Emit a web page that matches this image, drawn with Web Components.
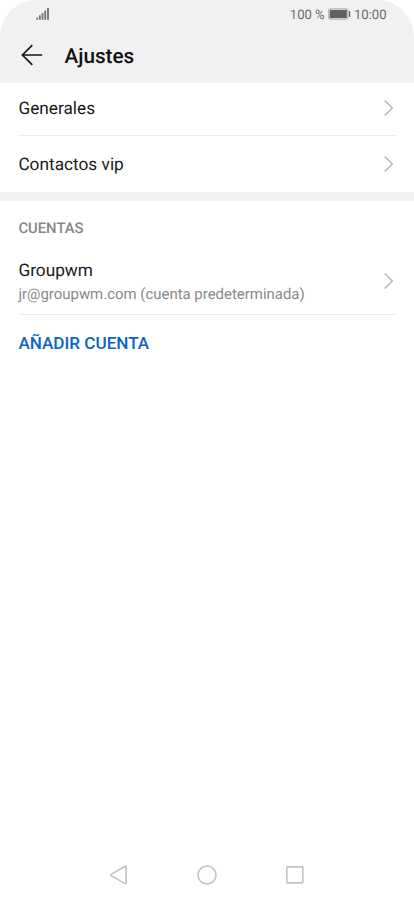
<!DOCTYPE html>
<html lang="es">
<head>
<meta charset="utf-8">
<title>Ajustes</title>
<style>
body { margin: 0; background: #fff; font-family: Roboto, "Liberation Sans", sans-serif; text-rendering: geometricPrecision; }
</style>
</head>
<body>
<settings-screen></settings-screen>
<script>
const define = (name, html) => {
  const template = document.createElement('template');
  template.innerHTML = html;
  customElements.define(name, class extends HTMLElement {
    constructor() {
      super();
      this.attachShadow({ mode: 'open' }).append(template.content.cloneNode(true));
    }
  });
};

define('status-bar', `
<style>
:host { display: flex; align-items: center; box-sizing: border-box; height: 28px; padding: 0 27.5px 0 36px; color: #6b6b6b; font-size: 13.1px; line-height: 24px; }
svg { display: block; flex: none; }
span { padding-top: 3px; }
.space { flex: 1; }
.battery { margin: 0 3px 0 3.2px; }
</style>
<svg width="14" height="28" viewBox="0 0 14 28" fill="#707070">
<rect x=".3" y="17.4" width="1.6" height="2.4"/><rect x="3" y="15.2" width="1.7" height="4.6"/><rect x="5.7" y="13" width="1.7" height="6.8"/><rect x="8.4" y="10.6" width="1.7" height="9.2"/><rect x="11.1" y="8" width="1.8" height="11.8"/>
</svg>
<span class="space"></span>
<span>100 %</span>
<svg class="battery" width="23" height="28" viewBox="0 0 23 28">
<rect x=".6" y="8.7" width="19.3" height="10.6" rx="1.4" fill="#d4d4d4" stroke="#b5b5b5" stroke-width="1"/><rect x="1.8" y="10" width="17" height="8" fill="#606060"/><rect x="20.8" y="11" width="1.4" height="6" rx=".6" fill="#666"/>
</svg>
<span>10:00</span>`);

define('app-header', `
<style>
:host { display: block; height: 82.6px; background: #f1f1f1; border-radius: 37px 37px 0 0; color: #111; }
.bar { display: flex; align-items: center; height: 54px; padding-left: 20px; }
svg { display: block; margin-right: 20.5px; }
h1 { margin: 0; font-size: 20.7px; font-weight: 500; line-height: 24px; padding-top: 4px; }
</style>
<status-bar></status-bar>
<div class="bar">
<svg width="24" height="24" viewBox="0 0 24 24" fill="none" stroke="#171717" stroke-width="1.7"><path d="M12.3 2.1 2.4 12l9.9 9.9M2.4 12H22.2"/></svg>
<h1><slot></slot></h1>
</div>`);

define('list-row', `
<style>
:host { display: flex; align-items: center; justify-content: space-between; box-sizing: border-box; margin: 0 18px 0 18.4px; color: #1a1a1a; font-size: 17.25px; line-height: 24px; }
div { padding-top: 2px; }
.detail { display: block; color: #8a8a8a; font-size: 14.95px; line-height: 22px; }
svg { display: block; margin-right: 1px; }
</style>
<div><slot></slot><span class="detail"><slot name="detail"></slot></span></div>
<svg width="12" height="18" viewBox="0 0 12 18" fill="none" stroke="#b4b4b4" stroke-width="1.4"><path d="m1.7 1.5 7.6 7.5-7.6 7.5"/></svg>`);

define('nav-bar', `
<style>
:host { display: flex; align-items: center; justify-content: center; gap: 64px; height: 45px; }
svg { display: block; }
</style>
<svg width="24" height="24" viewBox="0 0 24 24" fill="none" stroke="#c3c3c3" stroke-width="1.6"><path d="M19.1 3.9v16a.8.8 0 0 1-1.2.7L4.2 12.7a.8.8 0 0 1 0-1.3L17.9 3.3a.8.8 0 0 1 1.2.6Z"/></svg>
<svg width="24" height="24" viewBox="0 0 24 24" fill="none" stroke="#c3c3c3" stroke-width="1.6"><circle cx="12" cy="12" r="9"/></svg>
<svg width="24" height="24" viewBox="0 0 24 24" fill="none" stroke="#c3c3c3" stroke-width="1.6"><rect x="3.8" y="3.9" width="16" height="16" rx=".7"/></svg>`);

define('settings-screen', `
<style>
:host { display: flex; flex-direction: column; height: 897px; overflow: hidden; }
.first { height: 52.4px; padding-bottom: 2px; }
.second { height: 55.6px; }
.account { height: 73px; padding-top: 7px; }
.line { height: 1px; margin: 0 18px; background: #ececec; }
.band { height: 9.4px; background: #f1f1f1; }
h2 { margin: 0 18.4px; padding-top: 16px; height: 24px; color: #868686; font-size: 14.8px; line-height: 23px; font-weight: 500; }
.add { margin: 15px 18.4px 0; padding: 0; border: 0; background: none; text-align: left; font: 500 17.1px/26px Roboto, sans-serif; color: #0866c6; }
nav-bar { margin-top: auto; }
</style>
<app-header>Ajustes</app-header>
<list-row class="first">Generales</list-row>
<div class="line"></div>
<list-row class="second">Contactos vip</list-row>
<div class="band"></div>
<h2>CUENTAS</h2>
<list-row class="account">Groupwm<span slot="detail">jr@groupwm.com (cuenta predeterminada)</span></list-row>
<div class="line"></div>
<button class="add">AÑADIR CUENTA</button>
<nav-bar></nav-bar>`);
</script>
</body>
</html>
